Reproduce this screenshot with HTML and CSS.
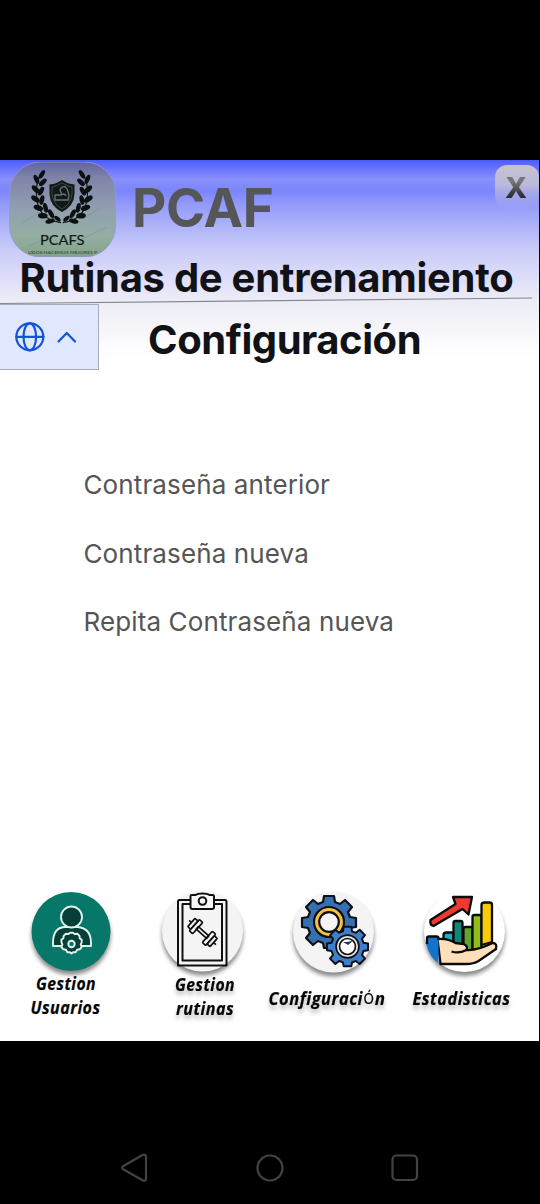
FILE: index.html
```html
<!DOCTYPE html>
<html lang="es">
<head>
<meta charset="utf-8">
<title>PCAF</title>
<link rel="stylesheet" href="styles.css">
</head>
<body>
<main class="app">
  <header class="brand">
    <svg class="logo" viewBox="9 163 107 95">
      <defs>
        <linearGradient id="lg" x1="0" y1="0" x2="0" y2="1">
          <stop offset="0" stop-color="#61639f"/><stop offset=".16" stop-color="#7e83a8"/><stop offset=".5" stop-color="#929fb0"/><stop offset=".78" stop-color="#94aea2"/><stop offset="1" stop-color="#82a486"/>
        </linearGradient>
        <g id="branch">
          <path d="M61 223Q35 220 34 195Q33 183 39 173" fill="none" stroke="#0b1010" stroke-width="1.2"/>
          <g fill="#0b1010">
            <ellipse cx="40" cy="174" rx="5" ry="2.300" transform="rotate(-55 40 174)"/>
            <ellipse cx="34" cy="179" rx="5" ry="2.500" transform="rotate(65 34 179)"/>
            <ellipse cx="41" cy="182" rx="5" ry="2.500" transform="rotate(-40 41 182)"/>
            <ellipse cx="33" cy="189" rx="5" ry="2.700" transform="rotate(42 33 189)"/>
            <ellipse cx="39" cy="191" rx="5" ry="2.500" transform="rotate(-58 39 191)"/>
            <ellipse cx="33" cy="199" rx="5.3" ry="2.700" transform="rotate(32 33 199)"/>
            <ellipse cx="40" cy="200" rx="5" ry="2.500" transform="rotate(-75 40 200)"/>
            <ellipse cx="36" cy="208" rx="5.3" ry="2.700" transform="rotate(18 36 208)"/>
            <ellipse cx="44" cy="208" rx="5" ry="2.500" transform="rotate(75 44 208)"/>
            <ellipse cx="41" cy="216" rx="5.3" ry="2.700" transform="rotate(4 41 216)"/>
            <ellipse cx="50" cy="214" rx="5" ry="2.500" transform="rotate(58 50 214)"/>
            <ellipse cx="49" cy="221.500" rx="5.3" ry="2.300" transform="rotate(-12 49 221.500)"/>
            <ellipse cx="57" cy="219" rx="4" ry="2" transform="rotate(35 57 219)"/>
          </g>
        </g>
      </defs>
      <rect x="9.500" y="163" width="106" height="95" rx="31" fill="url(#lg)" stroke="#9298cf" stroke-width=".8"/>
      <path d="M22 224l22-13M83 220l18-12M27 248l22-10M80 241l27-13" stroke="#869b9b" stroke-width="1"/>
      <g transform="translate(5.500 4) scale(.91 .985)"><use href="#branch"/><use href="#branch" transform="translate(124 0) scale(-1 1)"/></g>
      <path d="M62 181Q68 185 74.500 185.500V195Q74 207 62 213Q50 207 49.500 195V185.500Q56 185 62 181Z" fill="#111816"/>
      <path d="M62 184Q67 187 72 188V195Q71 205 62 210Q53 205 52 195V188Q57 187 62 184Z" fill="none" stroke="#4b5657" stroke-width=".8"/>
      <path d="M55 201v-5h5l2-1q-3-4-1-6q4-3 6 1q3 6 1 11Zm6-5q4-2 5 1" fill="none" stroke="#66757a" stroke-width="1.300"/>
      <text x="40" y="245.500" class="logo-name" textLength="44.500" lengthAdjust="spacingAndGlyphs">PCAFS</text>
      <text x="28" y="254.800" class="logo-motto" textLength="69" lengthAdjust="spacingAndGlyphs">UDOS HACEMOS MEJORES P</text>
    </svg>
    <h1 class="name">PCAF</h1>
    <button class="close"><span>X</span></button>
  </header>
  <h2 class="tagline">Rutinas de entrenamiento</h2>
  <svg class="rule" viewBox="0 297 539 8"><path d="M0 303.500L532 298" stroke="#85858c" stroke-width="1.200"/></svg>
  <section class="bar">
    <button class="lang">
      <svg viewBox="0 305 98 64" fill="none" stroke="#1452dc" stroke-width="2.200" stroke-linecap="round" stroke-linejoin="round">
        <circle cx="29.800" cy="336.800" r="13.500"/><ellipse cx="29.800" cy="336.800" rx="6.300" ry="13.500"/><path d="M16.500 336.800H43.500M58.500 341.500L66.800 333L75 341.500"/>
      </svg>
    </button>
    <h2 class="page-title">Configuración</h2>
  </section>
  <form class="fields">
    <label>Contraseña anterior</label>
    <label>Contraseña nueva</label>
    <label>Repita Contraseña nueva</label>
  </form>
  <nav class="tabs">
    <a class="tab"><svg viewBox="5.500 880 131 145">
      <circle class="disc" cx="70.500" cy="931.500" r="39.500" fill="#07776a"/>
      <g fill="#063f38" stroke="#e1f3ed" stroke-width="1.900" stroke-linejoin="round">
        <path d="M52.500 946V942Q53 927 65 927H77Q90 928 90.500 942V946Z"/>
        <circle cx="71" cy="917" r="10.500"/>
        <path d="M68 934l1.500-1.200h3l1.500 1.200 3-.2 2 2 .2 2.500 2 1.500v2.500l-1 2 1 2.500-2 2.500-2.600.5-1.500 2.400h-2.600l-1.500 1.200-1.500-1.200h-2.600l-1.400-2.400-2.600-.5-2-2.500 1-2.500-1-2v-2.500l2-1.500.3-2.500 2-2Z"/>
        <circle cx="71" cy="944" r="3.200" fill="#07776a"/>
      </g>
      <g class="caption"><text x="35.500" y="989.500" textLength="60" lengthAdjust="spacingAndGlyphs">Gestion</text><text x="30" y="1013.500" textLength="70" lengthAdjust="spacingAndGlyphs">Usuarios</text></g>
    </svg></a>
    <a class="tab"><svg viewBox="136.500 880 131 145">
      <circle class="disc" cx="202" cy="931" r="40.500" fill="#f4f4f4"/>
      <g fill="none" stroke="#101010" stroke-width="2" stroke-linejoin="round">
        <path d="M189.500 900H179Q177.500 900 177.500 902V965.500H226V902Q226 900 224.500 900H213.500"/>
        <path d="M190 904H182V960.500H221.500V904H213"/>
        <path fill="#f8f8f8" d="M190 896Q190 895 191.500 895H195Q197 893.500 202 893.500T209 895H212Q213.500 895 213.500 896.500V907Q213.500 909 211.500 909H192Q190 909 190 907Z"/>
        <circle cx="202" cy="901" r="3.800"/>
        <g transform="translate(202 932.500) rotate(42)" stroke-width="1.700">
          <path d="M-7-1.600H7V1.600H-7Z"/><rect x="-11" y="-7.500" width="4.500" height="15" rx="1"/><rect x="-15" y="-5.500" width="4" height="11" rx="1"/><rect x="6.500" y="-7.500" width="4.500" height="15" rx="1"/><rect x="11" y="-5.500" width="4" height="11" rx="1"/><path d="M-15 0h-3M15 0h3"/>
        </g>
      </g>
      <g class="caption shadow"><text x="174.500" y="991" textLength="60" lengthAdjust="spacingAndGlyphs">Gestion</text><text x="175.500" y="1014.500" textLength="58" lengthAdjust="spacingAndGlyphs">rutinas</text></g>
    </svg></a>
    <a class="tab"><svg viewBox="267.500 880 131 145">
      <circle class="disc" cx="333" cy="932" r="40.500" fill="#f4f4f4"/>
      <g stroke="#0c1119" stroke-width="2.200" stroke-linejoin="round">
        <g transform="translate(328.500 922)" fill="#386fae">
          <path id="bigGear" d="M-5-26H5L6-20L11-18L16-22L23-15L19-10L21-5L27-4V5L21 6L19 11L23 16L16 23L11 19L6 21L5 26H-5L-6 21L-11 19L-16 23L-23 16L-19 11L-21 6L-27 5V-4L-21-5L-19-10L-23-15L-16-22L-11-18L-6-20Z"/>
          <circle r="15" fill="#fcc23e"/><circle r="9.800" fill="#f4f4f4"/>
        </g>
        <g transform="translate(347 946.500) scale(.76)" fill="#3e7ecb">
          <use href="#bigGear" stroke-width="2.600"/>
          <circle r="15" fill="#eee7df"/><circle r="10.500" fill="#fff"/><path d="M-6-6L0-6L7-8L1-2Z" fill="#16345f" stroke="none"/>
        </g>
      </g>
      <g class="caption shadow"><text x="268" y="1004.500" textLength="94.500" lengthAdjust="spacingAndGlyphs">Configuraci</text><text class="accent" x="363" y="1004" textLength="10.500" lengthAdjust="spacingAndGlyphs">Ó</text><text x="374.300" y="1004.500" textLength="10.700" lengthAdjust="spacingAndGlyphs">n</text></g>
    </svg></a>
    <a class="tab"><svg viewBox="398.500 880 131 145">
      <circle class="disc" cx="464" cy="931.500" r="40.500" fill="#fff"/>
      <g stroke="#0b0b0b" stroke-width="2.300" stroke-linejoin="round">
        <path d="M443 947V935Q443 932.500 446 932.500H453V947Z" fill="#22abc0"/>
        <path d="M453 949V923Q453 921 455 921H460Q462 921 462 923V949Z" fill="#128779"/>
        <path d="M463 950V929Q463 927 465 927H472V951Z" fill="#62a52c"/>
        <path d="M472 950V917Q472 915 474 915H479Q481 915 481 917V948Z" fill="#91bd19"/>
        <path d="M481 945V905Q481 902.500 484 902.500H489Q491.500 902.500 491.500 905V942Z" fill="#f8cb09"/>
        <path d="M430 920L455 904L452.500 897H471.500L468 914.500L462 909L433 926Q429 925 430 920Z" fill="#ed3a31"/>
        <path d="M437 939Q447 938 455 943L463 944Q468 946 466 950Q476 951 492 943Q497 943 495.500 949L478 961Q473 964 466 964H440Z" fill="#ffdfb8"/>
        <path d="M426.500 937H436Q438 937 438 939V963Q430 959 425.500 944Z" fill="#1474cb" stroke="none"/><path d="M426.500 944V938.500Q426.500 936.500 428.500 936.500H436Q438 936.500 438 938.500V940M451 951.500Q458 954 466 950" fill="none"/>
      </g>
      <g class="caption shadow"><text x="412" y="1004.500" textLength="98" lengthAdjust="spacingAndGlyphs">Estadisticas</text></g>
    </svg></a>
  </nav>
</main>
<footer class="system">
  <svg viewBox="0 0 30 30"><path d="M3 13.200L22 2.300Q26 .500 26 4V25.500Q26 29 22 27L3 16.200Q1.200 14.700 3 13.200Z"/></svg>
  <svg viewBox="0 0 30 30"><circle cx="15" cy="15" r="12.500"/></svg>
  <svg viewBox="0 0 30 30"><rect x="2.500" y="2.500" width="24.500" height="24.500" rx="4"/></svg>
</footer>
</body>
</html>
```
FILE: styles.css
```css
* { box-sizing: border-box; }
body { margin: 0; height: 1204px; padding-top: 160px; background: #000; font-family: Inter, sans-serif; overflow: hidden; }
h1, h2 { margin: 0; white-space: nowrap; font-weight: 700; }
svg { display: block; }
button { padding: 0; border: 0; font: inherit; }
.app {
  display: flex; flex-direction: column; width: 539px; height: 881px;
  background: linear-gradient(#4a5bf5 0, #5865ff 3px, #6c77fd 10px, #8890fb 19px, #7b85fd 31px, #9299fa 44px, #aeb3f8 66px, #cccdf8 92px, #dcdcfa 116px, #ececf7 140px, #f4f4f9 165px, #fcfcfe 185px, #fff 200px);
}
.brand { display: flex; align-items: flex-start; height: 98px; padding: 2px 0 0 9px; }
.logo { width: 107px; height: 95px; }
.logo-name { font: 14px Lato, sans-serif; fill: #101717; stroke: #101717; stroke-width: .2px; }
.logo-motto { font: bold 4px Lato, sans-serif; fill: #425650; }
.name { margin: 14px 0 0 16px; font-size: 53px; line-height: 64px; letter-spacing: -.3px; color: #555658; }
.close { width: 44px; height: 44px; margin: 3px 0 0 auto; padding-right: 2px; border-radius: 12px; background: linear-gradient(#c7c3cd, #b9b9dc 45%, #a4a9f300); font-size: 29px; line-height: 46px; font-weight: 800; }
.close span { background: linear-gradient(#777 32%, #303038 72%); background-clip: text; color: transparent; }
.tagline { height: 39px; padding-left: 19.500px; font-size: 40px; line-height: 39px; letter-spacing: -.28px; color: #111216; }
.rule { width: 539px; height: 8px; }
.bar { display: flex; height: 65px; }
.lang { width: 99px; height: 66px; margin-top: -1px; border: 1px solid #a9adb9; border-left: 0; background: #dfe8ff; }
.lang svg { width: 98px; height: 64px; }
.page-title { padding-left: 49px; font-size: 40px; line-height: 70px; letter-spacing: -.46px; color: #111216; }
.fields { display: flex; flex-direction: column; gap: 36.500px; padding: 99px 0 0 83.500px; color: #555; }
.fields label { font-size: 26px; line-height: 32px; letter-spacing: .12px; }
.tabs { display: flex; margin-top: auto; padding: 0 0 16px 5.500px; }
.tab svg { width: 131px; height: 145px; overflow: visible; }
.disc { filter: drop-shadow(0 4px 2px #0007); }
.caption { font: italic 700 18px "Open Sans", sans-serif; letter-spacing: .5px; fill: #050505; stroke: #050505; stroke-width: .2px; }
.caption .accent { font: 15px Inter, sans-serif; letter-spacing: 0; }
.shadow { filter: drop-shadow(0 4px 2px #0004); }
.system { display: flex; justify-content: space-between; padding: 112px 120px 0 120px; }
.system svg { width: 30px; height: 30px; fill: none; stroke: #434343; stroke-width: 2.200; }
```
